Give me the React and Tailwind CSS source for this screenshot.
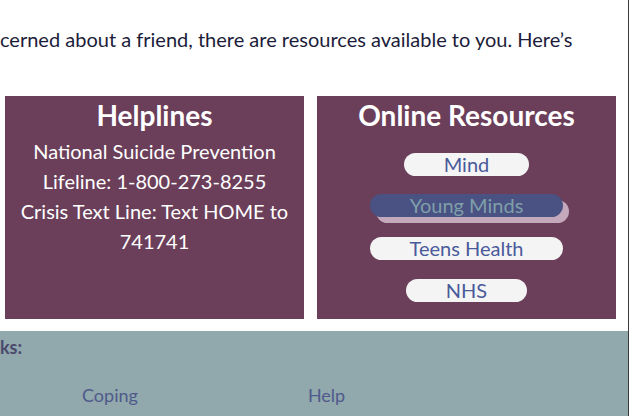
const LINKS = [
  { label: 'Mind', mt: 'mt-[17px]' },
  { label: 'Young Minds', mt: 'mt-[18px]', active: true },
  { label: 'Teens Health', mt: 'mt-[20px]' },
  { label: 'NHS', mt: 'mt-[19px]' },
]

function Pill({ label, mt, active }) {
  return (
    <a
      href="#"
      className={`${mt} block h-[23px] rounded-full px-[40px] text-[20px] leading-[23px] ${
        active
          ? 'bg-[#4a5283] text-[#7f9fa9] shadow-[6px_6px_0_#c4a9bc]'
          : 'bg-[#f4f4f4] text-[#4a5a9b]'
      }`}
    >
      {label}
    </a>
  )
}

export default function App() {
  return (
    <div
      className="relative h-[416px] w-[629px] overflow-hidden bg-white"
      style={{ fontFamily: 'Lato, "Noto Sans", sans-serif' }}
    >
      <div className="absolute right-0 top-0 h-full w-px bg-[#3a3a3a]" />
      <div className="mr-px">
        <p className="pt-[24px] whitespace-nowrap text-[20px] leading-[30px] text-[#1c1c3a]">
          cerned about a friend, there are resources available to you. Here’s
        </p>

        <div className="mt-[42px] flex gap-[13px] pl-[5px]">
          <section className="h-[223px] w-[299px] bg-[#6b3f5a] px-3 text-center text-white">
            <h2 className="text-[28px] font-bold leading-[39px]">Helplines</h2>
            <p className="mt-px text-[20px] leading-[30px]">
              National Suicide Prevention Lifeline: 1-800-273-8255
            </p>
            <p className="text-[20px] leading-[30px]">Crisis Text Line: Text HOME to 741741</p>
          </section>

          <section className="flex h-[223px] w-[299px] flex-col items-center bg-[#6b3f5a] text-center">
            <h2 className="text-[28px] font-bold leading-[39px] text-white">Online Resources</h2>
            <div className="mt-px flex flex-col items-center">
              {LINKS.map((l) => (
                <Pill key={l.label} {...l} />
              ))}
            </div>
          </section>
        </div>

        <footer className="mt-[12px] h-[85px] bg-[#91a8ad]">
          <p className="pt-[4px] text-[18px] font-bold leading-[24px] text-[#4b4a6d]">ks:</p>
          <div className="mt-[24px] flex text-[18px] leading-[24px] text-[#4f5a8b]">
            <a href="#" className="ml-[82px]">Coping</a>
            <a href="#" className="ml-[170px]">Help</a>
          </div>
        </footer>
      </div>
    </div>
  )
}
